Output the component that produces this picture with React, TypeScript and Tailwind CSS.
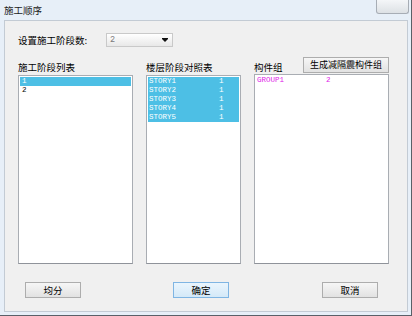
import React from 'react';

const cjk = { fontFamily: '"Noto Sans CJK SC", "Noto Sans", sans-serif' };
const mono = { fontFamily: '"Liberation Mono", "DejaVu Sans Mono", monospace' };

const stories = ['STORY1', 'STORY2', 'STORY3', 'STORY4', 'STORY5'];

function ListBox({ children, className = '' }: { children?: React.ReactNode; className?: string }) {
    return (
        <div className={`h-[189px] border border-[#a9adb3] border-b-[#8f939a] bg-white p-px ${className}`}>
            {children}
        </div>
    );
}

function DialogButton({ label, primary = false }: { label: string; primary?: boolean }) {
    return (
        <button
            className={
                primary
                    ? 'flex h-[16px] w-[56px] items-center justify-center border border-[#7fb5e3] bg-gradient-to-b from-[#eaf5fd] to-[#d4e9f8] text-[9.5px] text-black'
                    : 'flex h-[16px] w-[56px] items-center justify-center border border-[#adadad] bg-gradient-to-b from-[#f6f6f6] to-[#e2e2e2] text-[9.5px] text-black'
            }
        >
            {label}
        </button>
    );
}

export default function App() {
    return (
        <div
            className="flex h-[316px] w-[412px] flex-col border-r border-b border-r-[#5a6068] border-b-[#5a6068] bg-[#e7eff8]"
            style={cjk}
        >
            {/* title bar */}
            <div className="flex h-[20px] shrink-0 items-start justify-between">
                <span className="mt-[4px] ml-[4px] text-[9.5px] leading-[12px] text-[#1b1b1b]">施工顺序</span>
                <div className="mr-[2px] h-[14px] w-[33px] rounded-b-[3px] border border-t-0 border-[#a7adb5] bg-gradient-to-b from-[#f4f6f8] to-[#dde1e5]" />
            </div>

            {/* client area */}
            <div className="mr-[3px] ml-[4px] flex h-[292px] flex-col border border-[#c3cbd4] bg-[#f0f0f0]">
                <div className="flex items-center pt-[12px] pl-[13px]">
                    <span className="w-[88px] text-[9.5px] leading-[14px] text-black">设置施工阶段数:</span>
                    <div className="flex h-[14px] w-[67px] items-center justify-between border border-[#c9c9c9] bg-gradient-to-b from-white to-[#e8e8e8] pr-[4px] pl-[3px]">
                        <span className="text-[8.5px] text-[#7a7a7a]" style={mono}>2</span>
                        <svg width="6" height="4" viewBox="0 0 6 4">
                            <rect x="0" y="0" width="6" height="1" fill="#111" />
                            <polygon points="0,1 6,1 3,4" fill="#111" />
                        </svg>
                    </div>
                </div>

                <div className="mt-[10px] flex pl-[13px]">
                    <div className="w-[115px]">
                        <div className="flex h-[18px] items-end pb-[2px] text-[9.5px] leading-[12px] text-black">施工阶段列表</div>
                        <ListBox>
                            <div className="h-[9px] bg-[#4dbfe5] pl-[2px] text-[7.5px] leading-[9px] text-white" style={mono}>1</div>
                            <div className="h-[9px] pl-[2px] text-[7.5px] leading-[9px] text-black" style={mono}>2</div>
                        </ListBox>
                    </div>

                    <div className="ml-[13px] w-[95px]">
                        <div className="flex h-[18px] items-end pb-[2px] text-[9.5px] leading-[12px] text-black">楼层阶段对照表</div>
                        <ListBox>
                            {stories.map((s) => (
                                <div key={s} className="flex h-[9px] bg-[#4dbfe5] pl-[1px] text-[7.5px] leading-[9px] text-white" style={mono}>
                                    <span className="w-[70px]">{s}</span>
                                    <span>1</span>
                                </div>
                            ))}
                        </ListBox>
                    </div>

                    <div className="ml-[13px] w-[135px]">
                        <div className="flex h-[18px] items-end justify-between">
                            <span className="pb-[2px] text-[9.5px] leading-[12px] text-black">构件组</span>
                            <button className="mb-[2px] flex h-[16px] w-[86px] items-center justify-center border border-[#adadad] bg-gradient-to-b from-[#f6f6f6] to-[#e2e2e2] text-[9px] text-black">
                                生成减隔震构件组
                            </button>
                        </div>
                        <ListBox className="-mt-[1px] h-[190px]">
                            <div className="flex h-[9px] pl-[1px] text-[7.5px] leading-[9px] text-[#e020e8]" style={mono}>
                                <span className="w-[69px]">GROUP1</span>
                                <span>2</span>
                            </div>
                        </ListBox>
                    </div>
                </div>

                <div className="mt-[18px] flex pl-[20px]">
                    <DialogButton label="均分" />
                    <div className="ml-[92px]">
                        <DialogButton label="确定" primary />
                    </div>
                    <div className="ml-[93px]">
                        <DialogButton label="取消" />
                    </div>
                </div>
            </div>
        </div>
    );
}
